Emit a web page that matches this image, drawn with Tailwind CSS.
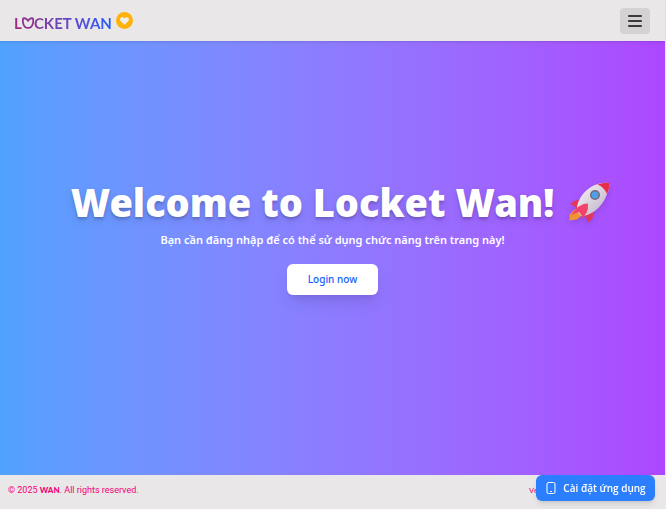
<!DOCTYPE html>
<html lang="vi">
<head>
<meta charset="utf-8">
<meta name="viewport" content="width=device-width, initial-scale=1">
<title>Locket Wan</title>
<script src="https://cdn.jsdelivr.net/npm/@tailwindcss/browser@4"></script>
</head>
<body class="flex min-h-screen flex-col bg-[#e9e7e7] pr-px font-['Noto_Sans','Open_Sans',sans-serif]">
  <header class="relative flex h-[41px] items-center justify-between pr-[15px] pl-3.5 shadow-sm">
    <a href="#" class="flex items-center gap-1 pt-1 font-['Lato',sans-serif] text-[15px] leading-5 font-bold">
      <span class="bg-linear-to-r from-[#a0287c] via-[#6744c4] via-50% to-[#155dfc] bg-clip-text whitespace-nowrap text-transparent">L<span class="relative inline-block">O<svg class="absolute inset-x-0 top-1 h-3.5 w-full" viewBox="0 0 14 16" preserveAspectRatio="none" fill="none" stroke="#8c2f92" stroke-width="2" stroke-linecap="round" stroke-linejoin="round" aria-hidden="true"><rect x="-1" width="16" height="16" fill="#e9e7e7" stroke="none"/><path d="M7 4.500C5.500 1.500 2 .8 1.500 1.500C.5 4 .8 12.500 7 12.500S13.500 4 12.500 1.500C12 .8 8.500 1.500 7 4.500Z"/></svg></span>CKET WAN</span>
      <svg class="mb-1 size-[17px]" viewBox="0 0 24 24" aria-hidden="true"><circle cx="12" cy="12" r="12" fill="#ffb20b"/><path d="M12 18L6.800 13C3.500 9 8.500 5 12 8.800C15.500 5 20.500 9 17.200 13Z" fill="#f2eeee"/></svg>
    </a>
    <button type="button" aria-label="Menu" class="flex h-[26px] w-[30px] items-center justify-center rounded bg-[#d4d2d2]">
      <svg class="h-3 w-3.5" viewBox="0 0 14 12" stroke="#0a0a0a" stroke-width="1.500" stroke-linecap="round" aria-hidden="true"><path d="M.7 1H13.300M.7 6H13.300M.7 11H13.300"/></svg>
    </button>
  </header>

  <main class="flex flex-1 flex-col items-center justify-center bg-linear-to-r from-[#51a2ff] to-[#ad46ff] pb-11 pl-4 text-white">
    <h1 class="flex items-center gap-3.5 text-[38px] leading-12 font-black whitespace-nowrap text-shadow-lg">Welcome to Locket Wan!
      <svg class="mt-0.5 size-[42px] drop-shadow-md" viewBox="0 0 42 42" role="img" aria-label="🚀">
        <defs><linearGradient id="hull" x1="0" y1="0" x2="1" y2="1"><stop offset="0.2" stop-color="#eee7ee"/><stop offset="1" stop-color="#b9acc4"/></linearGradient></defs>
        <path d="M7 27L1.500 32.500Q2 36 1 38.500L9 37.500L14 33Z" fill="#ee9430"/>
        <path d="M13 17.500Q5 18 2 22.500Q6 22.500 9 27ZM26 29Q26 37 20 40.500Q19.500 35.500 14.500 32.500Z" fill="#e53559"/>
        <path d="M9 29C8 18 18 5 30 2Q36 0 41 1Q42 7 39 12C35 24 24 34 13 34Z" fill="url(#hull)"/>
        <path d="M29.500 2.500Q36 0 41 1Q42 6 39 12Q36 5 29.500 2.500Z" fill="#e92c48"/>
        <path d="M20 21.500Q11 21 3 33.500Q6 31 11 30L14 34L11 38Q21 33 20 21.500Z" fill="#f34269"/>
        <circle cx="27" cy="13" r="5" fill="#77677f"/><circle cx="27" cy="13" r="3.500" fill="#4da1e7"/>
      </svg>
    </h1>
    <div class="flex flex-col items-center pr-4">
      <p class="mt-1 text-[11px] leading-5 font-semibold">Bạn cần đăng nhập để có thể sử dụng chức năng trên trang này!</p>
      <button type="button" class="mt-3.5 h-[31px] w-[91px] rounded-md bg-white text-[10px] font-medium text-[#155dfc] shadow-lg">Login now</button>
    </div>
  </main>

  <footer class="flex h-[34px] items-center justify-between px-2 pb-0.5 font-['Roboto',sans-serif] text-[9px] text-[#f4007a]">
    <p>© 2025 <span class="font-['Lato',sans-serif] text-[8px] font-black">WAN</span>. All rights reserved.</p>
    <p class="w-32 text-[8px]">Version</p>
  </footer>

  <button type="button" class="fixed right-[11px] bottom-2 flex h-[26px] w-[119px] items-center justify-center gap-1.5 rounded-md bg-[#2b7fff] font-['Open_Sans',sans-serif] text-[10px] font-semibold whitespace-nowrap text-white shadow-md">
    <svg class="h-3 w-3" viewBox="0 0 12 12" fill="none" stroke="currentColor" stroke-linecap="round" aria-hidden="true"><rect x="2" y=".5" width="8" height="11" rx="1.500"/><path d="M5.500 9.500H6.500"/></svg>
    Cài đặt ứng dụng
  </button>
</body>
</html>
